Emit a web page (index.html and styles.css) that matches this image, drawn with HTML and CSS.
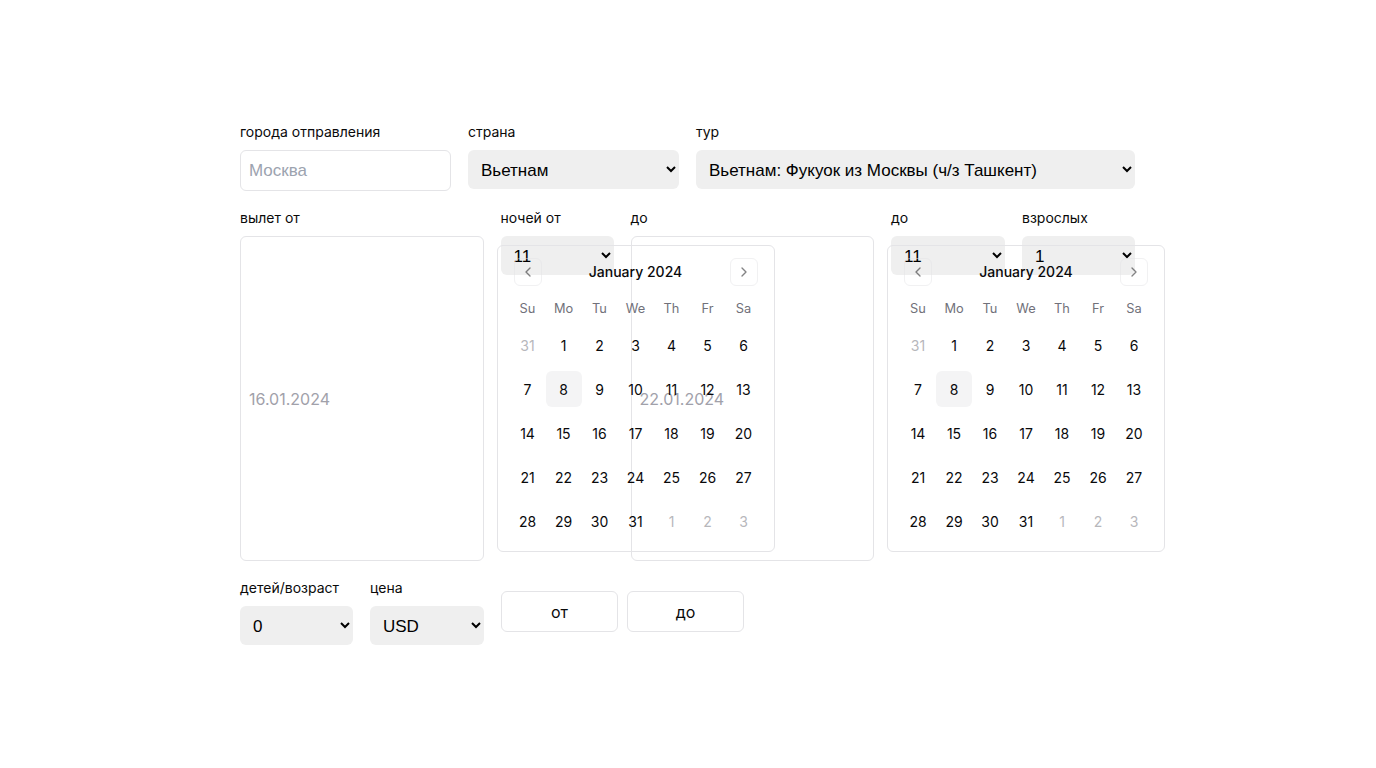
FILE: index.html
```html
<!DOCTYPE html>
<html lang="ru">
<head>
<meta charset="utf-8">
<title>Поиск тура</title>
<link rel="stylesheet" href="styles.css">
</head>
<body>
<main class="page">
  <form class="filters">
    <div class="row row-top">
      <div class="field">
        <label class="label">города отправления</label>
        <input class="text-input" type="text" placeholder="Москва">
      </div>
      <div class="field">
        <label class="label">страна</label>
        <select class="select"><option>Вьетнам</option></select>
      </div>
      <div class="field field-wide">
        <label class="label">тур</label>
        <select class="select"><option>Вьетнам: Фукуок из Москвы (ч/з Ташкент)</option></select>
      </div>
    </div>

    <div class="row row-mid">
      <div class="field">
        <label class="label">вылет от</label>
        <div class="date-wrap">
          <input class="date-input" type="text" placeholder="16.01.2024">
          <div class="calendar">
            <div class="cal-caption">
              <button type="button" class="nav-btn nav-prev"><svg viewBox="0 0 24 24"><path d="m15 18-6-6 6-6"/></svg></button>
              <span class="cal-title">January 2024</span>
              <button type="button" class="nav-btn nav-next"><svg viewBox="0 0 24 24"><path d="m9 18 6-6-6-6"/></svg></button>
            </div>
            <div class="cal-head"><span>Su</span><span>Mo</span><span>Tu</span><span>We</span><span>Th</span><span>Fr</span><span>Sa</span></div>
            <div class="cal-days">
              <span class="day out">31</span><span class="day">1</span><span class="day">2</span><span class="day">3</span><span class="day">4</span><span class="day">5</span><span class="day">6</span>
              <span class="day">7</span><span class="day today">8</span><span class="day">9</span><span class="day">10</span><span class="day">11</span><span class="day">12</span><span class="day">13</span>
              <span class="day">14</span><span class="day">15</span><span class="day">16</span><span class="day">17</span><span class="day">18</span><span class="day">19</span><span class="day">20</span>
              <span class="day">21</span><span class="day">22</span><span class="day">23</span><span class="day">24</span><span class="day">25</span><span class="day">26</span><span class="day">27</span>
              <span class="day">28</span><span class="day">29</span><span class="day">30</span><span class="day">31</span><span class="day out">1</span><span class="day out">2</span><span class="day out">3</span>
            </div>
          </div>
        </div>
      </div>
      <div class="field">
        <label class="label">ночей от</label>
        <select class="select"><option>11</option></select>
      </div>
      <div class="field">
        <label class="label">до</label>
        <div class="date-wrap">
          <input class="date-input" type="text" placeholder="22.01.2024">
          <div class="calendar">
            <div class="cal-caption">
              <button type="button" class="nav-btn nav-prev"><svg viewBox="0 0 24 24"><path d="m15 18-6-6 6-6"/></svg></button>
              <span class="cal-title">January 2024</span>
              <button type="button" class="nav-btn nav-next"><svg viewBox="0 0 24 24"><path d="m9 18 6-6-6-6"/></svg></button>
            </div>
            <div class="cal-head"><span>Su</span><span>Mo</span><span>Tu</span><span>We</span><span>Th</span><span>Fr</span><span>Sa</span></div>
            <div class="cal-days">
              <span class="day out">31</span><span class="day">1</span><span class="day">2</span><span class="day">3</span><span class="day">4</span><span class="day">5</span><span class="day">6</span>
              <span class="day">7</span><span class="day today">8</span><span class="day">9</span><span class="day">10</span><span class="day">11</span><span class="day">12</span><span class="day">13</span>
              <span class="day">14</span><span class="day">15</span><span class="day">16</span><span class="day">17</span><span class="day">18</span><span class="day">19</span><span class="day">20</span>
              <span class="day">21</span><span class="day">22</span><span class="day">23</span><span class="day">24</span><span class="day">25</span><span class="day">26</span><span class="day">27</span>
              <span class="day">28</span><span class="day">29</span><span class="day">30</span><span class="day">31</span><span class="day out">1</span><span class="day out">2</span><span class="day out">3</span>
            </div>
          </div>
        </div>
      </div>
      <div class="field">
        <label class="label">до</label>
        <select class="select"><option>11</option></select>
      </div>
      <div class="field">
        <label class="label">взрослых</label>
        <select class="select"><option>1</option></select>
      </div>
    </div>

    <div class="row row-bottom">
      <div class="field field-kids">
        <label class="label">детей/возраст</label>
        <select class="select"><option>0</option></select>
      </div>
      <div class="field field-price">
        <label class="label">цена</label>
        <select class="select"><option>USD</option></select>
      </div>
      <div class="price-buttons">
        <button type="button" class="price-btn">от</button>
        <button type="button" class="price-btn">до</button>
      </div>
    </div>
  </form>
</main>
</body>
</html>
```

FILE: styles.css
```css
* {
  box-sizing: border-box;
}

html, body {
  margin: 0;
  padding: 0;
  background: #ffffff;
}

body {
  font-family: Inter, "Noto Sans", sans-serif;
  color: #0a0a0a;
}

.page {
  min-height: 100vh;
  display: flex;
  align-items: center;
  justify-content: center;
  padding: 0 1px 1px 0;
}

.filters {
  width: 895px;
  display: flex;
  flex-direction: column;
  gap: 17px;
}

.row-top {
  display: grid;
  grid-template-columns: repeat(4, 1fr);
  gap: 17px;
  align-items: start;
}

.field-wide {
  grid-column: span 2;
}

.row-mid {
  display: grid;
  grid-template-columns: 1fr 113px 1fr 114px 113px;
  gap: 17px;
  align-items: start;
}

.row-bottom {
  display: flex;
  align-items: center;
  gap: 17px;
}

.field {
  display: flex;
  flex-direction: column;
  gap: 8px;
  min-width: 0;
}

.field-kids {
  width: 113px;
}

.field-price {
  width: 114px;
}

.label {
  font-size: 14px;
  line-height: 20px;
  color: #0a0a0a;
}

.text-input {
  height: 41px;
  width: 100%;
  border: 1px solid #e4e4e7;
  border-radius: 6px;
  padding: 0 8px;
  font-family: "Liberation Sans", Arial, sans-serif;
  font-size: 17px;
  color: #0a0a0a;
  background: #ffffff;
  outline: none;
}

.text-input::placeholder {
  color: #9ca3af;
}

.select {
  height: 39px;
  width: 100%;
  border: none;
  border-radius: 6px;
  background-color: #efefef;
  padding: 2px 8px 0 9px;
  font-family: "Liberation Sans", Arial, sans-serif;
  font-size: 17px;
  color: #000000;
}

.date-wrap {
  display: flex;
}

.date-input {
  flex: 0 0 100%;
  width: 100%;
  border: 1px solid #e4e4e7;
  border-radius: 6px;
  padding: 0 8px;
  font-family: Inter, sans-serif;
  font-size: 16px;
  color: #0a0a0a;
  background: transparent;
  outline: none;
}

.date-input::placeholder {
  color: #a1a1aa;
}

.calendar {
  position: relative;
  flex: none;
  margin: 9px 0 9px 13px;
  border: 1px solid #e4e4e7;
  border-radius: 6px;
  padding: 12px;
  width: 278px;
  font-family: Inter, sans-serif;
}

.cal-caption {
  position: relative;
  display: flex;
  justify-content: center;
  align-items: center;
  padding-top: 4px;
  height: 24px;
}

.cal-title {
  font-size: 14px;
  line-height: 20px;
  font-weight: 500;
  color: #09090b;
}

.nav-btn {
  position: absolute;
  top: 0;
  width: 28px;
  height: 28px;
  padding: 0;
  border: 1px solid #e4e4e7;
  border-radius: 6px;
  background: transparent;
  opacity: 0.5;
  display: flex;
  align-items: center;
  justify-content: center;
  color: #09090b;
}

.nav-prev {
  left: 4px;
}

.nav-next {
  right: 4px;
}

.nav-btn svg {
  width: 16px;
  height: 16px;
  fill: none;
  stroke: currentColor;
  stroke-width: 2;
  stroke-linecap: round;
  stroke-linejoin: round;
}

.cal-head {
  margin-top: 16px;
  display: grid;
  grid-template-columns: repeat(7, 36px);
  font-size: 12.8px;
  line-height: 21px;
  color: #71717a;
  text-align: center;
}

.cal-days {
  margin-top: 8px;
  display: grid;
  grid-template-columns: repeat(7, 36px);
  grid-auto-rows: 36px;
  row-gap: 8px;
}

.day {
  display: flex;
  align-items: center;
  justify-content: center;
  font-size: 14px;
  color: #09090b;
  border-radius: 6px;
}

.day.today {
  background: #f4f4f5;
}

.day.out {
  color: #71717a;
  opacity: 0.5;
}

.price-buttons {
  display: flex;
  gap: 9px;
}

.price-btn {
  width: 117px;
  height: 41px;
  border: 1px solid #e4e4e7;
  border-radius: 6px;
  background: #ffffff;
  font-family: Inter, sans-serif;
  font-size: 16px;
  font-weight: 400;
  color: #0a0a0a;
}
```
